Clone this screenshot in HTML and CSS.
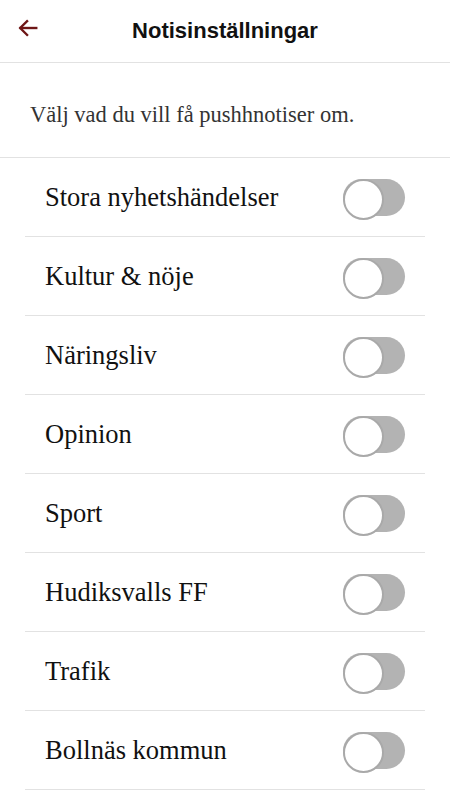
FILE: index.html
```html
<!DOCTYPE html>
<html lang="sv">
<head>
    <meta charset="UTF-8">
    <meta name="viewport" content="width=device-width, initial-scale=1.0">
    <title>Notisinställningar</title>
    <link rel="stylesheet" href="styles.css">
</head>
<body>
    <header class="topbar">
        <a class="back" href="#" aria-label="Tillbaka">
            <svg width="22" height="22" viewBox="0 0 24 24" fill="none" stroke="currentColor" stroke-width="2.6" stroke-linecap="square">
                <path d="M21 12H4"/>
                <path d="M11 4.5L3.5 12L11 19.5"/>
            </svg>
        </a>
        <h1>Notisinställningar</h1>
    </header>

    <p class="intro">Välj vad du vill få pushhnotiser om.</p>

    <ul class="settings">
        <li class="setting"><span>Stora nyhetshändelser</span><label class="toggle"><input type="checkbox"><span class="track"></span></label></li>
        <li class="setting"><span>Kultur &amp; nöje</span><label class="toggle"><input type="checkbox"><span class="track"></span></label></li>
        <li class="setting"><span>Näringsliv</span><label class="toggle"><input type="checkbox"><span class="track"></span></label></li>
        <li class="setting"><span>Opinion</span><label class="toggle"><input type="checkbox"><span class="track"></span></label></li>
        <li class="setting"><span>Sport</span><label class="toggle"><input type="checkbox"><span class="track"></span></label></li>
        <li class="setting"><span>Hudiksvalls FF</span><label class="toggle"><input type="checkbox"><span class="track"></span></label></li>
        <li class="setting"><span>Trafik</span><label class="toggle"><input type="checkbox"><span class="track"></span></label></li>
        <li class="setting"><span>Bollnäs kommun</span><label class="toggle"><input type="checkbox"><span class="track"></span></label></li>
    </ul>
</body>
</html>
```

FILE: styles.css
```css
* {
    box-sizing: border-box;
    margin: 0;
    padding: 0;
}

html, body {
    height: 100%;
    overflow: hidden;
}

body {
    background: #fff;
    color: #111;
    font-family: "Liberation Serif", serif;
}

.topbar {
    height: 63px;
    display: flex;
    align-items: center;
    justify-content: center;
    border-bottom: 1px solid #e2e2e2;
    position: relative;
}

.topbar h1 {
    font-family: "Liberation Sans", Arial, sans-serif;
    font-size: 22px;
    font-weight: bold;
    color: #111;
    margin-top: -1px;
}

.back {
    position: absolute;
    left: 17px;
    top: 17px;
    color: #6e1616;
    display: flex;
}

.intro {
    height: 95px;
    display: flex;
    align-items: center;
    padding: 10px 30px 0;
    font-size: 22.5px;
    color: #333;
    border-bottom: 1px solid #e2e2e2;
}

.settings {
    list-style: none;
    padding: 0 25px;
}

.setting {
    height: 79px;
    display: flex;
    align-items: center;
    justify-content: space-between;
    padding: 0 20px;
    border-bottom: 1px solid #e2e2e2;
    font-size: 26.5px;
}

.toggle {
    position: relative;
    width: 62px;
    height: 37px;
}

.toggle input {
    display: none;
}

.track {
    display: block;
    width: 100%;
    height: 100%;
    border-radius: 19px;
    background: #b3b3b3;
    position: relative;
}

.track::after {
    content: "";
    position: absolute;
    left: 0;
    top: 0;
    width: 37px;
    height: 37px;
    border-radius: 50%;
    background: #fff;
    border: 2px solid #a9a9a9;
}
```
